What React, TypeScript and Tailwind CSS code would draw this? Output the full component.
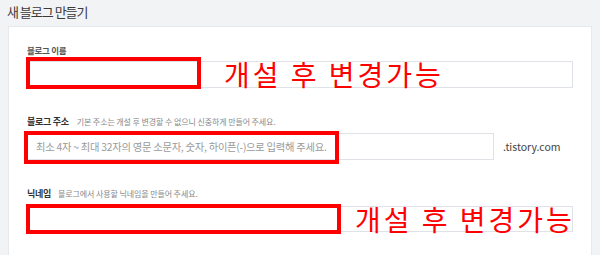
import React from "react";

const kr = "font-['Noto_Sans_CJK_KR',_'Noto_Sans',_sans-serif]";

export default function App() {
  return (
    <div className={`w-[600px] h-[255px] overflow-hidden bg-[#f2f3f5] ${kr}`}>
      <h1 className="h-[26px] pl-[7px] pt-[2px] text-[13px] leading-[20px] tracking-[-1px] text-[#3a3a3a]">
        새 블로그 만들기
      </h1>
      <div className="mx-[8px] h-[240px] border border-[#e7e9ed] bg-white px-[18px] pt-[17px]">
        {/* 블로그 이름 */}
        <div className="text-[8.5px] leading-[12px] tracking-[-0.3px] font-bold text-[#555]">블로그 이름</div>
        <div className="relative mt-[5px] h-[27px] w-[546px] border border-[#dfe3e8]">
          <div className="absolute left-[-2px] top-[-5px] h-[32px] w-[175px] border-[4px] border-[#ff0000]" />
          <span className="absolute left-[196px] top-[-3px] whitespace-nowrap text-[28px] leading-[30px] tracking-[3px] text-[#ff0000]">
            개설 후 변경가능
          </span>
        </div>

        {/* 블로그 주소 */}
        <div className="mt-[28px] flex items-baseline gap-[8px] leading-[12px]">
          <span className="text-[9px] tracking-[-0.3px] font-bold text-[#333]">블로그 주소</span>
          <span className="text-[8px] tracking-[-0.1px] text-[#888]">
            기본 주소는 개설 후 변경할 수 없으니 신중하게 만들어 주세요.
          </span>
        </div>
        <div className="mt-[5px] flex items-center gap-[9px]">
          <div className="relative flex h-[27px] w-[467px] items-center border border-[#dfe3e8] pl-[8px]">
            <span className="whitespace-nowrap text-[10.3px] tracking-[-0.25px] text-[#9a9a9a]">
              최소 4자 ~ 최대 32자의 영문 소문자, 숫자, 하이픈(-)으로 입력해 주세요.
            </span>
            <div className="absolute left-[-4px] top-[-3px] h-[33px] w-[315px] border-[4px] border-[#ff0000]" />
          </div>
          <span className="text-[10.5px] text-[#444]">.tistory.com</span>
        </div>

        {/* 닉네임 */}
        <div className="mt-[28px] flex items-baseline gap-[7px] leading-[12px]">
          <span className="text-[9px] tracking-[-0.3px] font-bold text-[#333]">닉네임</span>
          <span className="text-[8px] tracking-[-0.1px] text-[#888]">블로그에서 사용할 닉네임을 만들어 주세요.</span>
        </div>
        <div className="relative mt-[6px] h-[26px] w-[546px] border border-[#dfe3e8]">
          <div className="absolute left-[-2px] top-[-3px] h-[30px] w-[315px] border-[4px] border-[#ff0000]" />
          <span className="absolute left-[327px] top-[-3px] whitespace-nowrap text-[28px] leading-[30px] tracking-[3px] text-[#ff0000]">
            개설 후 변경가능
          </span>
        </div>
      </div>
    </div>
  );
}
